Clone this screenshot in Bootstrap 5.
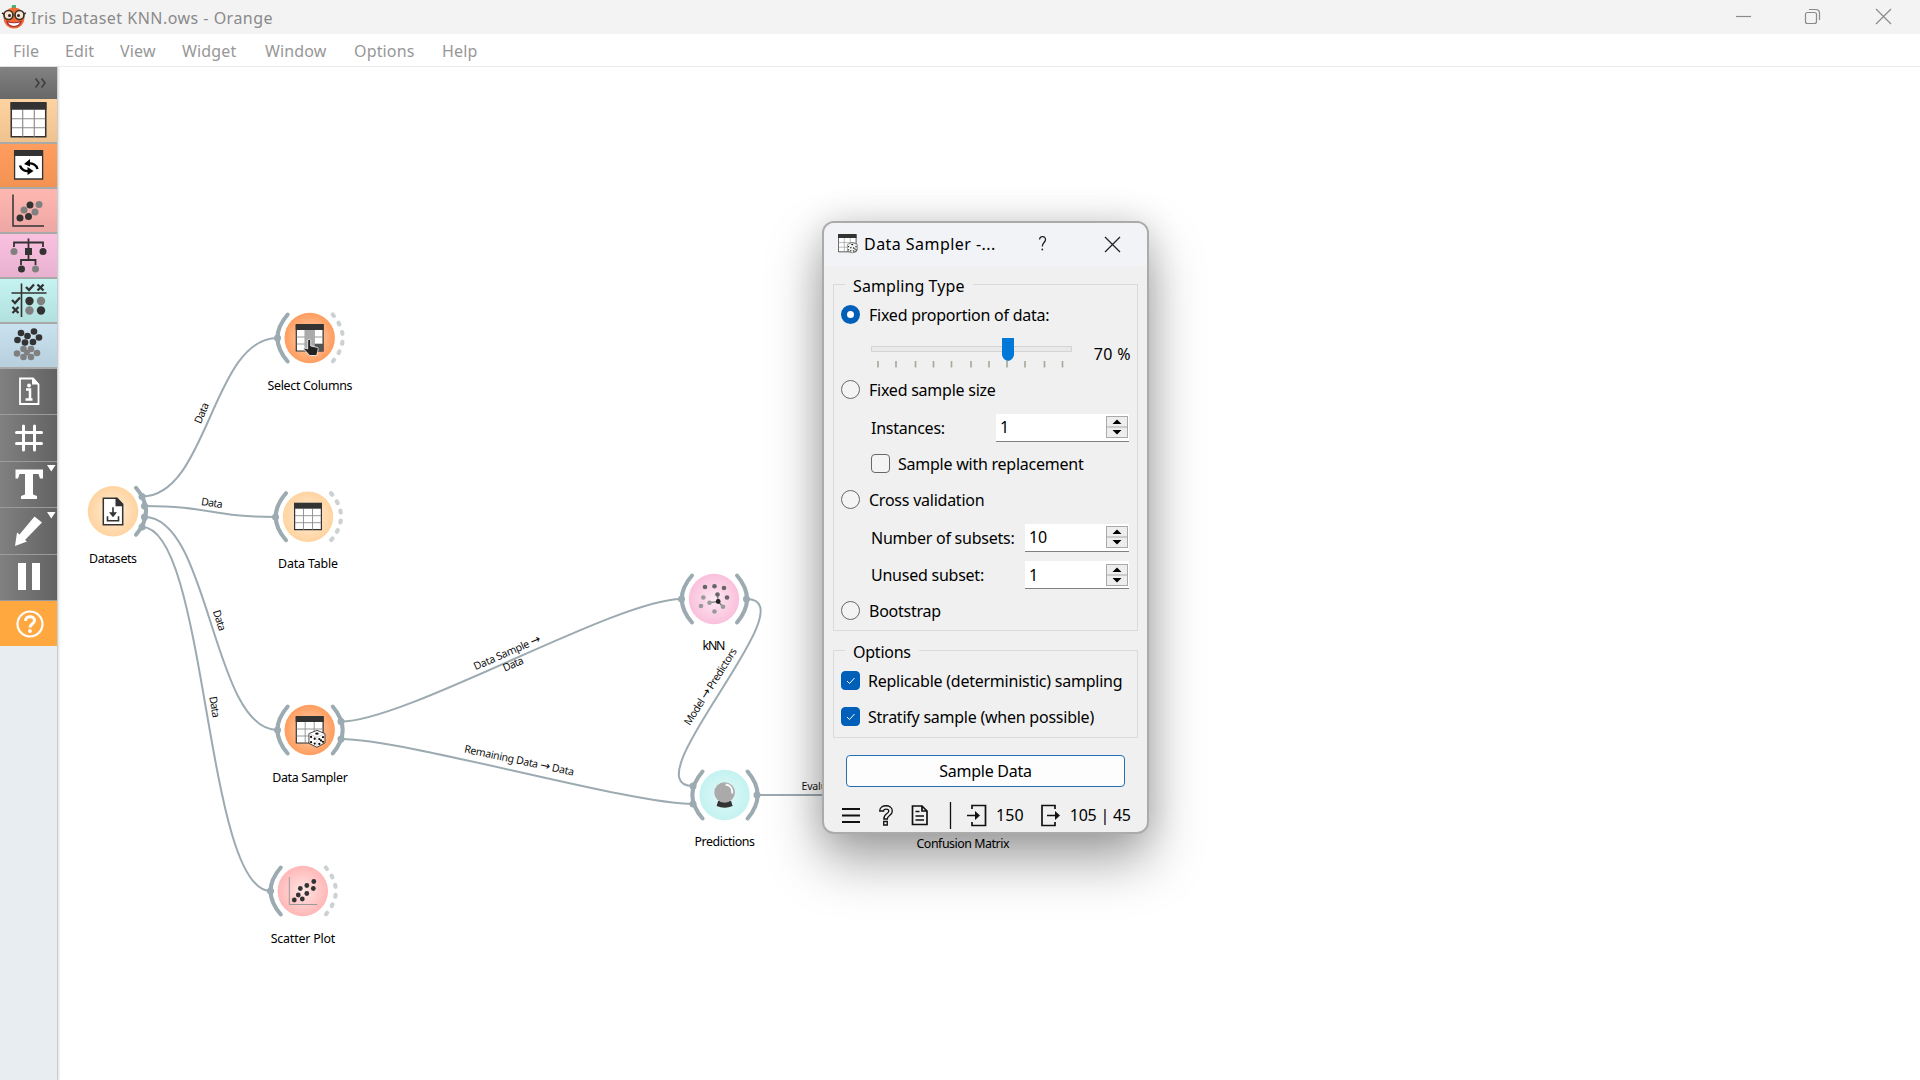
<!DOCTYPE html>
<html lang="en">
<head>
<meta charset="utf-8">
<title>Iris Dataset KNN.ows - Orange</title>
<link href="https://cdn.jsdelivr.net/npm/bootstrap@5.3.0/dist/css/bootstrap.min.css" rel="stylesheet">
<style>
body{width:1920px;height:1080px;overflow:hidden;background:#fff;color:#000;font-family:"Noto Sans","Open Sans",sans-serif;font-size:16px;line-height:20px}
.titlebar{height:34px;background:#f3f3f3;color:#8a8a8a}
.titlebar .caption{margin:1px 0 0 5px;letter-spacing:.48px}
.menubar{height:33px;border-bottom:1px solid #ebebeb;color:#979797;padding:1px 0 0 13px;letter-spacing:.15px}
.menubar a{color:inherit;text-decoration:none;white-space:nowrap}
.dock{width:58px;background:#e8edf1;border-right:1px solid #c9cdd0;box-shadow:1px 0 2px #0002;z-index:1}
.dock svg{display:block}
.dock-head{height:32px;background:linear-gradient(#828282,#686868);padding-right:10px}
.tile{height:45px;border-bottom:2px solid #a9a9a9}
.tool{height:46.4px;border-bottom:1.5px solid #9b9b9b;background:linear-gradient(90deg,#808080,#636363)}
.tile svg,.tool svg{margin-top:-.5px}
.t1{background:linear-gradient(#ffd39f,#eec390)}.t2{background:linear-gradient(#ff9d5e,#f29353)}
.t3{background:linear-gradient(#ffb7b1,#eda7a4)}.t4{background:linear-gradient(#fac0df,#e9b1d0)}
.t5{background:linear-gradient(#c4f3f1,#b2e0df)}.t6{background:linear-gradient(#cae1ef,#b8d0de)}
.help-tool{background:#ffa840;border:0;height:45px}
.canvas text{font-family:"Noto Sans","Open Sans",sans-serif;fill:#000}
.canvas .arrow{font-family:"DejaVu Sans",sans-serif;font-size:12px}
.node-label text{font-size:12.4px;text-anchor:middle}
.link-label text{font-size:10.6px;text-anchor:middle;fill:#111}
.wire{fill:none;stroke:#9cabb1;stroke-width:2}
.arc{fill:none;stroke:#9cabb1;stroke-width:4;stroke-linecap:round}
.dots{fill:none;stroke:#ccd1d3;stroke-width:4.2;stroke-linecap:round;stroke-dasharray:1.8 8.200}
.pin{fill:#9cabb1}
.dialog-window{left:822px;top:221px;width:327px;height:613px;border:2px solid #ababab;border-radius:12px;background:#f0f0f0;box-shadow:0 26px 54px rgba(0,0,0,.36),0 0 34px rgba(0,0,0,.13);z-index:5;letter-spacing:-.24px}
.dialog-head{height:43px;background:#f2f3f6;padding:0 0 2px 14px}
.dialog-head .caption{margin-left:5px;letter-spacing:.45px}
.group-box{border:1px solid #dadada;margin:0 9px}
.group-box .legend-text{top:-9px;left:11px;background:#f0f0f0;padding:0 8px}
.legend-wide{letter-spacing:.1px}
.opt{width:19px;height:19px;flex:none;border:1px solid #686868;background:#f4f4f4}
.opt-round{border-radius:50%}.opt-box{border-radius:4px}
.opt-on{border:6px solid #005fb8;background:#fff}
.opt-check{background:#005fb8;border-color:#005fb8}
.opt + span{margin-left:8px;padding-top:1px}
.opt-round + span{margin-left:9px}
.spin{height:28px;background:#fff;border-bottom:1px solid #808080;padding:0 1px 0 4px}
.spin-btns{width:22px;height:22px;border:1px solid #a9a9a9;background:#eee}
.line-in{padding-left:7px}.line-sub{padding-left:37px;padding-right:8px}
.run-btn{height:32px;border:1px solid #2470b3;border-radius:4px;background:#fdfdfd;margin:17px 22px 0}
</style>
</head>
<body class="d-flex flex-column">
<svg width="0" height="0" class="position-absolute">
<defs>
<symbol id="grid" viewBox="0 0 28 28" overflow="visible"><path fill="#fff" stroke="#333" stroke-width="1.2" d="M.6 1h26.800v26H.6z"/><path stroke="#8c8c8c" stroke-width=".9" d="M1 13h26M1 20h26M9.500 6v21M18.500 6v21"/><path fill="#333" d="M0 0h28v6H0z"/></symbol>
<symbol id="dice" viewBox="0 0 18 18"><path fill="#fff" stroke="#222" stroke-width=".8" stroke-linejoin="round" d="M9 .8 16.800 4v9L9 17.300 1.200 13.500V4z"/><path fill="none" stroke="#bbb" stroke-width=".6" d="M1.500 4.200 9 7.500 16.500 4.200M9 7.500v9.300"/><g fill="#111"><ellipse cx="9" cy="4" rx="1.700" ry="1.200"/><circle cx="3.300" cy="7.300" r="1.100"/><circle cx="6.800" cy="13.700" r="1.100"/><circle cx="3.300" cy="12.300" r="1.100"/><circle cx="6.800" cy="9" r="1.100"/><circle cx="11.300" cy="9.300" r="1.100"/><circle cx="14.900" cy="7.500" r="1.100"/><circle cx="11.300" cy="14" r="1.100"/><circle cx="14.900" cy="12" r="1.100"/><circle cx="13" cy="10.700" r="1.100"/></g></symbol>
<radialGradient id="gData"><stop offset="0" stop-color="#ffefdc"/><stop offset="1" stop-color="#ffd39f"/></radialGradient>
<radialGradient id="gTrans"><stop offset="0" stop-color="#ffd5b8"/><stop offset="1" stop-color="#ff9d5e"/></radialGradient>
<radialGradient id="gVis"><stop offset="0" stop-color="#ffe6e4"/><stop offset="1" stop-color="#ffb7b7"/></radialGradient>
<radialGradient id="gModel"><stop offset="0" stop-color="#fde8f3"/><stop offset="1" stop-color="#fac0db"/></radialGradient>
<radialGradient id="gEval"><stop offset="0" stop-color="#e2f8f7"/><stop offset="1" stop-color="#c3f3f1"/></radialGradient>
<path id="arcL" d="M-22-23.500Q-42.500 0-22 23.500"/>
<path id="arcR" d="M23-23.500Q43 0 23 23.500"/>
</defs></svg>

<header class="titlebar d-flex align-items-center flex-shrink-0">
 <svg width="26" height="34" viewBox="0 0 26 34"><path d="M12 5h4v3h-3v3h-2z" fill="#48b078"/><circle cx="14" cy="18" r="10.500" fill="#f06a32"/><path d="M4 17c3-6 17-6 20 0" fill="#ee8b2a"/><circle cx="8.500" cy="15" r="4.500" fill="#f8e6d4" stroke="#3b302a" stroke-width="1.700"/><circle cx="19.500" cy="15" r="4.500" fill="#f8e6d4" stroke="#3b302a" stroke-width="1.700"/><circle cx="9.500" cy="15.500" r="1.500" fill="#322"/><circle cx="18.500" cy="15.500" r="1.500" fill="#322"/><path d="M2 13l2 1M26 13l-2 1" stroke="#3b302a" stroke-width="1.500"/><path d="M7 21.500q7 2.500 14 0-1.500 5-7 5t-7-5z" fill="#fff" stroke="#a52a3a" stroke-width="1.200"/></svg>
 <span class="caption">Iris Dataset KNN.ows - Orange</span>
 <svg class="ms-auto" width="190" height="34" fill="none" stroke="#8a8a8a" stroke-width="1.200"><path d="M6 16.500h15"/><rect x="75.500" y="12.500" width="11" height="11" rx="2"/><path d="M79 9.500h7a3.500 3.500 0 0 1 3.500 3.500v7"/><path d="m146 9 15 15m0-15-15 15"/></svg>
</header>
<nav class="menubar d-flex align-items-center flex-shrink-0">
 <a href="#" style="width:52px">File</a><a href="#" style="width:55px">Edit</a><a href="#" style="width:62px">View</a><a href="#" style="width:83px">Widget</a><a href="#" style="width:89px">Window</a><a href="#" style="width:88px">Options</a><a href="#">Help</a>
</nav>
<main class="d-flex flex-grow-1 position-relative">
 <aside class="dock d-flex flex-column flex-shrink-0">
  <div class="dock-head d-flex align-items-center justify-content-end"><svg width="13" height="12" fill="none" stroke="#404040" stroke-width="1.700"><path d="m1.500 1.500 3.500 4.500-3.500 4.500M7.500 1.500 11 6l-3.500 4.500"/></svg></div>
  <div class="tile t1"><svg width="57" height="43"><use href="#grid" x="10.500" y="3" width="36" height="36"/></svg></div>
  <div class="tile t2"><svg width="57" height="43"><path fill="#fff" stroke="#333" stroke-width="1.300" d="M14.600 7h28v28h-28z"/><path fill="#333" d="M14 6h29v6H14z"/><path fill="none" stroke="#000" stroke-width="2.400" d="M37.500 25c-1-4-5-6-9-5.500M20 21.500c1 4 5 6 9 5.500"/><path d="m24 20 6-5v7.500zM33.500 27l-6-4v8z"/></svg></div>
  <div class="tile t3"><svg width="57" height="43"><path fill="none" stroke="#333" stroke-width="1.500" d="M13 5.500v31.500h31"/><g fill="#333"><circle cx="30" cy="16" r="3.500"/><circle cx="20" cy="29" r="3.500"/><circle cx="28.500" cy="27.500" r="3.500"/></g><g fill="#808080"><circle cx="39" cy="15.500" r="3.500"/><circle cx="24" cy="21" r="3.500"/><circle cx="35" cy="23" r="3.500"/></g></svg></div>
  <div class="tile t4"><svg width="57" height="43"><path fill="none" stroke="#333" stroke-width="1.800" d="M14 13V8.500h29V13M28.500 4.500v10M21 31v-5h14.500v5M28.500 19v7"/><path fill="#333" d="M25 14h7v7h-7z"/><g fill="#333"><circle cx="43" cy="17.500" r="3.500"/><circle cx="21.500" cy="35" r="3.500"/></g><g fill="#808080"><circle cx="14" cy="17.500" r="3.500"/><circle cx="35.500" cy="35" r="3.500"/></g></svg></div>
  <div class="tile t5"><svg width="57" height="43" stroke="#333" stroke-width="1.600" fill="none"><path d="M11.500 14h35M21.500 4.500V38"/><path stroke-width="2.300" d="m26 8 3 3 5-5.500M37.500 5.500l6 6m0-6-6 6M12 21l3 3 5-5.500M12.500 28l6 6m0-6-6 6"/><g stroke="none"><circle cx="29.500" cy="22" r="4.200" fill="#333"/><circle cx="41" cy="31.500" r="4.200" fill="#333"/><circle cx="41" cy="22" r="4.200" fill="#808080"/><circle cx="29.500" cy="31.500" r="4.200" fill="#808080"/></g></svg></div>
  <div class="tile t6"><svg width="57" height="43"><g fill="#333"><circle cx="21" cy="9" r="3.300"/><circle cx="34" cy="7.500" r="3.300"/><circle cx="27.500" cy="12" r="3.300"/><circle cx="39" cy="13.500" r="3.300"/><circle cx="17.500" cy="16" r="3.300"/><circle cx="25" cy="18.500" r="3.300"/><circle cx="33" cy="18" r="3.300"/></g><g fill="#808080"><circle cx="23.500" cy="25" r="3.300"/><circle cx="31" cy="25" r="3.300"/><circle cx="17" cy="29.500" r="3.300"/><circle cx="27" cy="28.500" r="3"/><circle cx="37" cy="29" r="3.300"/><circle cx="23.500" cy="33" r="3.300"/><circle cx="31" cy="33" r="3.300"/></g></svg></div>
  <div class="tool"><svg width="57" height="44" fill="none" stroke="#fff"><path stroke-width="1.800" d="M20 9.500h13l5.500 6V35H20z"/><path fill="#fff" stroke="none" d="M32 9h1.500l6 6.500H32z"/><path stroke-width="2.500" d="M26 20.500h4v9.500M25.500 30.500h7"/><circle cx="29" cy="16.500" r="1.900" fill="#fff" stroke="none"/></svg></div>
  <div class="tool"><svg width="57" height="44" fill="none" stroke="#fff" stroke-width="3" stroke-linecap="round"><path d="M23.500 11v24M34.500 11v24M16.500 17.500h25M16.500 28.500h25"/></svg></div>
  <div class="tool"><svg width="57" height="44" fill="#fff"><path d="M15.500 8.500h27.500v9h-3l-1.500-4.500H33v20.500l4 1.500v3H21v-3l4-1.500V13h-5.500L18 17.500h-2.500zM47 4h8.500l-4.200 6.500z"/></svg></div>
  <div class="tool"><svg width="57" height="44" fill="#fff"><path d="m34.500 8.500 7.500 6-17 17.500 2 1.500L15 38l2-13.500 2.500 2zM47 4h8.500l-4.200 6.500z"/></svg></div>
  <div class="tool"><svg width="57" height="44" fill="#fff"><path d="M18 9h8v27h-8zM32 9h8v27h-8z"/></svg></div>
  <div class="tool help-tool"><svg width="57" height="44" fill="none" stroke="#fff"><circle cx="30" cy="24" r="12.500" stroke-width="2.200"/><path stroke-width="3" d="M25.500 21c0-6 9-5.500 9-.5 0 3.500-4.500 3.500-4.500 7"/><circle cx="30" cy="31" r="1.900" fill="#fff" stroke="none"/></svg></div>
 </aside>

 <!-- workflow canvas, drawn in window coordinates -->
 <svg class="canvas flex-grow-1" width="1862" height="1013" viewBox="58 67 1862 1013">
  <g class="wire">
   <path d="M142 496.500C208 496.500 212 338 277.500 338"/><path d="M144.500 506C210 506 211 517 275.500 517"/><path d="M144.500 517C210 517 212 730 277.500 730"/><path d="M142 527C207 527 205 891 270.500 891"/><path d="M341 721.500C406 721.500 616.500 599 681.500 599"/><path d="M341 739C406 739 628 804 693 804"/><path d="M746.500 599C811.500 599 628 786 693 786"/><path d="M757 795H930"/>
  </g>
  <g transform="translate(309.700 338)"><circle r="25.200" fill="url(#gTrans)"/><use href="#arcL" class="arc"/><use href="#arcR" class="dots"/><use href="#grid" x="-14" y="-14" width="28" height="28"/><path fill="#aaa" d="M-5-8H5V13H-5z"/><path fill="#555" d="M5 6h8.500v7.500H5z"/><path fill="#222" stroke="#fff" stroke-width=".8" d="M-2 2q1.500-1.500 3 0v6l7 1.500q1 .5 0 4L7 17.500H0L-6 11q0-2 4 0z"/></g>
  <g transform="translate(113 511.300)"><circle r="25.200" fill="url(#gData)"/><use href="#arcR" class="arc"/><path fill="#fff" stroke="#333" stroke-width="1.500" d="M-9.700-13H4L9.700-7V13.500H-9.700z"/><path fill="#333" d="M2.500-13.500H4L10-7v2H2.500z"/><path fill="none" stroke="#333" stroke-width="1.600" d="M0-4v7M-5.500 5v4.500h11V5"/><path fill="#333" d="M-4 1h8L0 6z"/></g>
  <g transform="translate(308 516.700)"><circle r="25.200" fill="url(#gData)"/><use href="#arcL" class="arc"/><use href="#arcR" class="dots"/><use href="#grid" x="-14" y="-14" width="28" height="28"/></g>
  <g transform="translate(309.700 730)"><circle r="25.200" fill="url(#gTrans)"/><use href="#arcL" class="arc"/><use href="#arcR" class="arc"/><use href="#grid" x="-14" y="-14" width="28" height="28"/><use href="#dice" x="-2" y="-.5" width="18.500" height="18.500"/></g>
  <g transform="translate(302.800 891)"><circle r="25.200" fill="url(#gVis)"/><use href="#arcL" class="arc"/><use href="#arcR" class="dots"/><path fill="none" stroke="#999" d="M-13.500-14v27.500h28"/><g fill="#333"><circle cx="11" cy="-9.500" r="2.400"/><circle cx="4" cy="-5.500" r="2.400"/><circle cx="-2.500" cy="-2.500" r="2.400"/><circle cx="10.500" cy="-2.500" r="2.400"/><circle cx="4" cy="2.500" r="2.400"/><circle cx="-4.500" cy="4" r="2.400"/><circle cx="-8.500" cy="9" r="2.400"/><circle cx="-.5" cy="8" r="2.400"/></g></g>
  <g transform="translate(714 599)"><circle r="25.200" fill="url(#gModel)"/><use href="#arcL" class="arc"/><use href="#arcR" class="arc"/><path stroke="#777" stroke-width="1.200" fill="none" d="m3.500-4.500.7 7-8.700 1.200M4.200 2.500 9 8"/><g fill="#666"><circle cx="-9" cy="-12" r="2.300"/><circle cx=".5" cy="-12.700" r="2.300"/><circle cx="10" cy="-11" r="2.300"/><circle cx="13" cy="-1.500" r="2.300"/><circle cx="3.500" cy="-4.500" r="2.300"/></g><circle cx="4.200" cy="2.500" r="2.400" fill="#222"/><g fill="#999"><circle cx="-10.700" cy="-1.500" r="2.300"/><circle cx="-13" cy="7" r="2.300"/><circle cx="-4.500" cy="3.800" r="2.300"/><circle cx=".5" cy="12.500" r="2.300"/><circle cx="9" cy="7.700" r="2.300"/></g></g>
  <g transform="translate(724.600 795)"><circle r="25.200" fill="url(#gEval)"/><use href="#arcL" class="arc"/><use href="#arcR" class="arc"/><path fill="#333" d="M-6.500 6h13l1.500 5q-8 3.500-16 0z"/><circle cy="-2.500" r="10.300" fill="#aaa"/><path fill="none" stroke="#fff" stroke-width="1.800" d="M1-10.500c5 .5 7 4.500 6.700 9"/></g>
  <g class="pin"><circle cx="277.500" cy="338" r="3.500"/><circle cx="142" cy="496.500" r="3.500"/><circle cx="144.500" cy="506" r="3.500"/><circle cx="144.500" cy="517" r="3.500"/><circle cx="142" cy="527" r="3.500"/><circle cx="275.500" cy="517" r="3.500"/><circle cx="277.500" cy="730" r="3.500"/><circle cx="341" cy="721.500" r="3.500"/><circle cx="341" cy="739" r="3.500"/><circle cx="270.500" cy="891" r="3.500"/><circle cx="681.500" cy="599" r="3.500"/><circle cx="746.500" cy="599" r="3.500"/><circle cx="693" cy="786" r="3.500"/><circle cx="693" cy="804" r="3.500"/><circle cx="757" cy="795" r="3.500"/></g>
  <g class="node-label">
   <text x="310" y="389.700" textLength="85">Select Columns</text><text x="113" y="562.500" textLength="48">Datasets</text><text x="308" y="568" textLength="60">Data Table</text><text x="310" y="782" textLength="75.500">Data Sampler</text><text x="303" y="943" textLength="64.500">Scatter Plot</text><text x="714" y="650" textLength="23">kNN</text><text x="724.700" y="846" textLength="60.500">Predictions</text><text x="963" y="848" textLength="93">Confusion Matrix</text>
  </g>
  <g class="link-label">
   <text transform="translate(205 414.500)rotate(-67)" textLength="21.500">Data</text><text transform="translate(211.500 506.500)rotate(8)" textLength="21.500">Data</text><text transform="translate(216 621.500)rotate(73)" textLength="21.500">Data</text><text transform="translate(211 707.500)rotate(81)" textLength="21.500">Data</text>
   <text transform="translate(508.500 656)rotate(-23.500)" textLength="72">Data Sample <tspan class="arrow">→</tspan></text><text transform="translate(514.500 667.500)rotate(-23.500)" textLength="21.500">Data</text>
   <text transform="translate(518.500 764)rotate(12)" textLength="112">Remaining Data <tspan class="arrow">→</tspan> Data</text><text transform="translate(713.500 688.500)rotate(-57.600)" textLength="89">Model <tspan class="arrow">→</tspan> Predictors</text>
   <text transform="translate(845 790)" textLength="87">Evaluation Results</text>
  </g>
 </svg>
</main>

<section class="dialog-window position-absolute overflow-hidden" role="dialog">
 <div class="dialog-head d-flex align-items-center">
  <svg width="21" height="22"><use href="#grid" x="0" y="1" width="18.500" height="18.500"/><use href="#dice" x="8.500" y="9" width="11.500" height="11.500"/></svg>
  <span class="caption">Data Sampler -...</span>
  <svg class="ms-auto me-4" width="93" height="22" fill="none" stroke="#222" stroke-width="1.300"><path d="M9.500 6.500c.5-4 6.500-3.500 6 .3-.3 2.700-3.200 3-3.200 6.700"/><circle cx="12.300" cy="16.500" r=".9" fill="#222" stroke="none"/><path d="m75 4 15 15m0-15L75 19"/></svg>
 </div>
 <div class="group-box position-relative" style="height:347px;margin-top:18px;padding-top:13px">
  <span class="legend-text legend-wide position-absolute">Sampling Type</span>
  <div class="line-in d-flex align-items-center" style="height:33px"><span class="opt opt-round opt-on"></span><span>Fixed proportion of data:</span></div>
  <div class="line-sub d-flex align-items-center" style="height:41px"><svg width="202" height="41"><path fill="#e9e9e9" stroke="#d3d3d3" d="M.5 15.500h200v5H.5z"/><path stroke="#a9a59b" stroke-width="1.600" d="M7 30v6.500M25 30v6.500M44.500 30v6.500M62.500 30v6.500M80.500 30v6.500M100 30v6.500M118 30v6.500M136 30v6.500M154 30v6.500M173.500 30v6.500M191.500 30v6.500"/><path fill="#0078d7" d="M131 7h12v17q-1 5-6 6-5-1-6-6z"/></svg><span class="ms-auto pt-1" style="letter-spacing:.4px;margin-right:-2px">70 %</span></div>
  <div class="line-in d-flex align-items-center" style="height:35px"><span class="opt opt-round"></span><span>Fixed sample size</span></div>
  <div class="line-sub d-flex align-items-center justify-content-between" style="height:41px"><span>Instances:</span><div class="spin d-flex align-items-center justify-content-between" style="width:133px"><span>1</span><svg class="spin-btns" viewBox="0 0 20 20"><path d="M0 10h20" stroke="#a9a9a9"/><path d="M10 2.500 14.500 7h-9zM10 17.500 5.500 13h9z"/></svg></div></div>
  <div class="line-sub d-flex align-items-center" style="height:31px"><span class="opt opt-box"></span><span>Sample with replacement</span></div>
  <div class="line-in d-flex align-items-center" style="height:41px"><span class="opt opt-round"></span><span>Cross validation</span></div>
  <div class="line-sub d-flex align-items-center justify-content-between" style="height:35px"><span>Number of subsets:</span><div class="spin d-flex align-items-center justify-content-between" style="width:104px"><span>10</span><svg class="spin-btns" viewBox="0 0 20 20"><path d="M0 10h20" stroke="#a9a9a9"/><path d="M10 2.500 14.500 7h-9zM10 17.500 5.500 13h9z"/></svg></div></div>
  <div class="line-sub d-flex align-items-center justify-content-between" style="height:40px"><span>Unused subset:</span><div class="spin d-flex align-items-center justify-content-between" style="width:104px"><span>1</span><svg class="spin-btns" viewBox="0 0 20 20"><path d="M0 10h20" stroke="#a9a9a9"/><path d="M10 2.500 14.500 7h-9zM10 17.500 5.500 13h9z"/></svg></div></div>
  <div class="line-in d-flex align-items-center" style="height:31px"><span class="opt opt-round"></span><span>Bootstrap</span></div>
 </div>
 <div class="group-box position-relative" style="height:88px;margin-top:19px;padding-top:13px">
  <span class="legend-text position-absolute">Options</span>
  <div class="line-in d-flex align-items-center" style="height:33px"><svg class="opt opt-box opt-check" viewBox="0 0 17 17"><path d="m5 9 2.500 2.500L12.500 6" fill="none" stroke="#fff"/></svg><span>Replicable (deterministic) sampling</span></div>
  <div class="line-in d-flex align-items-center" style="height:39px"><svg class="opt opt-box opt-check" viewBox="0 0 17 17"><path d="m5 9 2.500 2.500L12.500 6" fill="none" stroke="#fff"/></svg><span>Stratify sample (when possible)</span></div>
 </div>
 <div class="run-btn d-flex align-items-center justify-content-center">Sample Data</div>
 <div class="d-flex align-items-center" style="height:44px;margin:6px 0 0 18px">
  <svg width="145" height="30" fill="none" stroke="#111" stroke-width="1.700"><path stroke-width="2.200" d="M0 9h18M0 15.500h18M0 22h18"/><path stroke-width="1.300" d="M37.700 11c0-7 12.600-7 12.600 0 0 5-5 4-5 8h-3.500c0-6 5-5 5-8 0-2.500-5.200-2.500-5.200 0zM41.700 21.500h3.600V25h-3.600z"/><path d="M70.500 6H80l5 5v13.500H70.500zM80 6v5h5M73.500 11.500h4M73.500 16h8.500M73.500 20h8.500"/><path stroke-width="1.300" d="M108.500 2v27"/><path d="M130 9V5.500h13.500v20H130V22"/><path d="M125 15.500h9"/><path fill="#111" stroke="none" d="m133 11 5 4.500-5 4.500z"/></svg>
  <span style="margin-left:9px;letter-spacing:.1px">150</span>
  <svg width="20" height="30" fill="none" stroke="#111" stroke-width="1.700" style="margin-left:17px"><path d="M14 9V5.500H1v20h13V22M6 15.500h9"/><path fill="#111" stroke="none" d="m14 11 5 4.500-5 4.500z"/></svg>
  <span style="margin-left:9px" class="text-nowrap">105 | 45</span>
 </div>
</section>
<script src="https://cdn.jsdelivr.net/npm/bootstrap@5.3.0/dist/js/bootstrap.bundle.min.js"></script>
</body>
</html>
